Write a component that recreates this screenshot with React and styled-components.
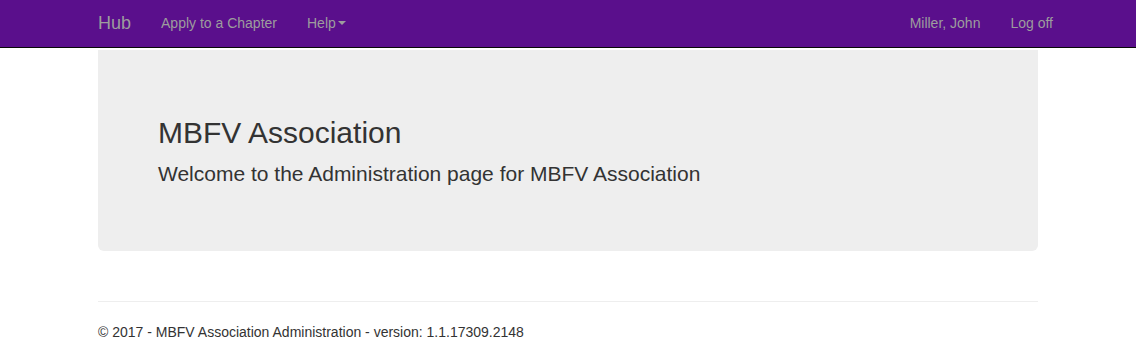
import React from "react";
import styled, { createGlobalStyle } from "styled-components";

const Global = createGlobalStyle`
  * { box-sizing: border-box; }
  html, body { margin: 0; padding: 0; background: #fff; }
  body {
    font-family: "Liberation Sans", Arial, Helvetica, sans-serif;
    font-size: 14px;
    line-height: 1.428571;
    color: #333;
  }
`;

const Navbar = styled.nav`
  height: 48px;
  background: #5a0f8c;
  border-bottom: 1px solid #080808;
`;

const NavContainer = styled.div`
  width: 970px;
  margin: 0 auto;
  padding: 0 15px;
  height: 100%;
  display: flex;
  align-items: stretch;
`;

const Brand = styled.a`
  display: flex;
  align-items: center;
  margin-left: -15px;
  padding: 0 15px 2px;
  font-size: 18px;
  line-height: 20px;
  color: #9d9d9d;
  text-decoration: none;
`;

const NavList = styled.div`
  display: flex;
  align-items: stretch;
  margin-left: ${(p) => (p.$right ? "auto" : "0")};
  margin-right: ${(p) => (p.$right ? "-30px" : "0")};
`;

const NavLink = styled.a`
  display: flex;
  align-items: center;
  padding: 0 15px 1px;
  font-size: 14px;
  line-height: 20px;
  color: #9d9d9d;
  text-decoration: none;
`;

const Caret = styled.span`
  display: inline-block;
  width: 0;
  height: 0;
  margin-left: 2px;
  border-top: 4px solid #9d9d9d;
  border-right: 4px solid transparent;
  border-left: 4px solid transparent;
`;

const Container = styled.div`
  width: 970px;
  margin: 0 auto;
  padding: 0 15px;
`;

const Jumbotron = styled.div`
  margin-top: 2px;
  height: 201px;
  background: #eee;
  border-radius: 0 0 6px 6px;
  padding: 66px 60px 0;
  margin-bottom: 50px;
`;

const Title = styled.h1`
  margin: 0 0 10px;
  font-size: 30px;
  font-weight: 500;
  line-height: 33px;
  color: #333;
`;

const Lead = styled.p`
  margin: 0;
  font-size: 21px;
  font-weight: 200;
  line-height: 30px;
  color: #333;
`;

const Rule = styled.hr`
  margin: 0 0 20px;
  border: 0;
  border-top: 1px solid #eee;
`;

const Footer = styled.footer`
  p {
    margin: 0;
    font-size: 14px;
    line-height: 20px;
    color: #333;
  }
`;

export default function App() {
  return (
    <>
      <Global />
      <Navbar>
        <NavContainer>
          <Brand href="#">Hub</Brand>
          <NavList>
            <NavLink href="#">Apply to a Chapter</NavLink>
            <NavLink href="#">
              Help<Caret />
            </NavLink>
          </NavList>
          <NavList $right>
            <NavLink href="#">Miller, John</NavLink>
            <NavLink href="#">Log off</NavLink>
          </NavList>
        </NavContainer>
      </Navbar>
      <Container>
        <Jumbotron>
          <Title>MBFV Association</Title>
          <Lead>Welcome to the Administration page for MBFV Association</Lead>
        </Jumbotron>
        <Rule />
        <Footer>
          <p>© 2017 - MBFV Association Administration - version: 1.1.17309.2148</p>
        </Footer>
      </Container>
    </>
  );
}
